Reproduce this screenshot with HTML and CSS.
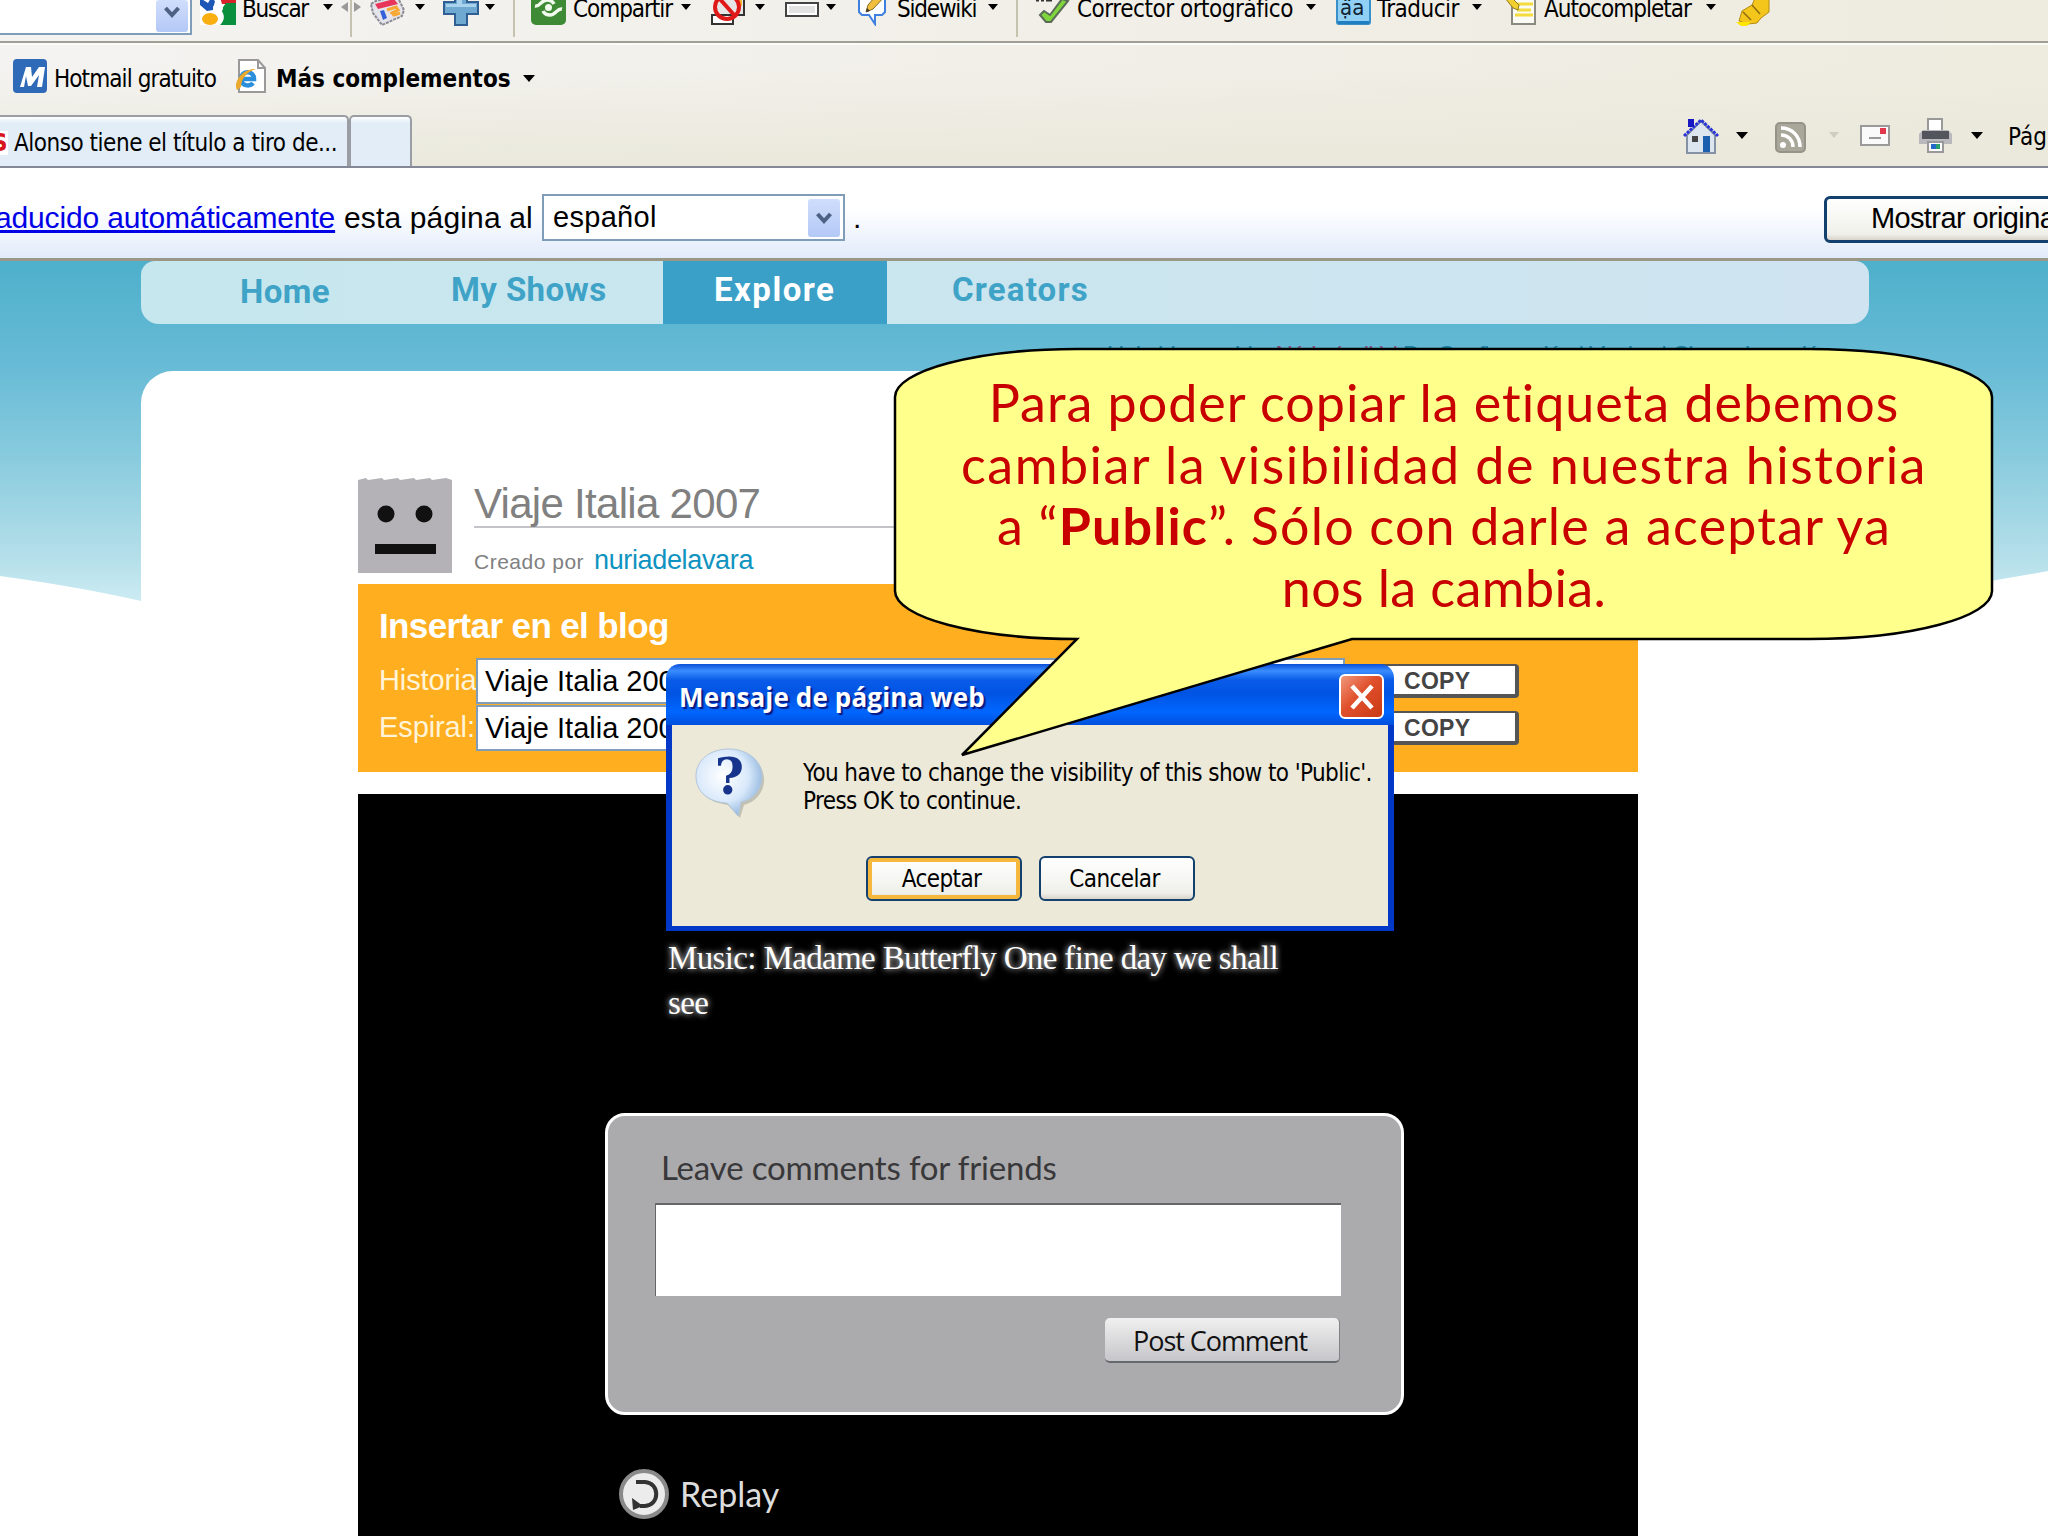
FILE: index.html
```html
<!DOCTYPE html>
<html lang="es">
<head>
  <meta charset="UTF-8" />
  <meta name="viewport" content="width=device-width, initial-scale=1.0"/>
  <title>Viaje Italia 2007</title>
  <link rel="stylesheet" href="styles.css">
</head>
<body>

  <div class="chrome">
    <div class="google-bar">
      <div class="search-box"><span class="drop"><svg width="16" height="12" viewBox="0 0 16 12"><path d="M1.500 2l6.500 7 6.500-7" /></svg></span></div>
      <svg class="tool-icon" width="36" height="36" viewBox="0 0 36 36">
        <path d="M0 0h36v35H0z" fill="#fff"/>
        <path d="M18 0h18v14H22z" fill="#d8232a"/>
        <path d="M36 13v22H20c5-5 5-10 1-15l5-7z" fill="#0a8f3c"/>
        <path d="M0 8l8 5 3-5 4 3-2 9-6 1-7-6z" fill="#1c57b8"/>
        <circle cx="18" cy="18" r="5" fill="#fff"/>
        <ellipse cx="10" cy="29" rx="8" ry="6" fill="#f9ae12"/>
      </svg>
      <span class="label buscar">Buscar</span>
      <i class="caret"></i>
      <div class="splitter"><i class="left"></i><i class="right"></i></div>
      <svg class="tool-icon" width="36" height="36" viewBox="0 0 36 36">
        <path d="M2 14l5-3L28 6l7 14-2 6-20 9-9-12z" fill="#e4e4ea" stroke="#8b8b95" stroke-width="2" stroke-dasharray="3 1"/>
        <path d="M6 14l19-5 4 5-20 5z" fill="#e8365a"/>
        <path d="M11 21l3 9 4-2-3-8z" fill="#3560d8"/>
        <path d="M18 20l9-3 2 3-6 3 2 2 6-2" fill="none" stroke="#f9a933" stroke-width="3"/>
      </svg>
      <i class="caret"></i>
      <svg class="tool-icon" width="36" height="36" viewBox="0 0 36 36">
        <path d="M12 1h12v11h11v12H24v11H12V24H1V12h11z" fill="#6fa9d2" stroke="#2f5f93" stroke-width="2"/>
        <path d="M14 3h5v11h-5zM3 14h30v3H3z" fill="#a9d2ec"/>
      </svg>
      <i class="caret"></i>
      <div class="separator"></div>
      <svg class="tool-icon" width="36" height="36" viewBox="0 0 36 36">
        <rect width="35" height="35" rx="5" fill="#3f8a35"/>
        <path d="M4 16c5 1 6-6 12-6 4 0 6 2 7 4M31 19c-5-1-6 6-12 6-4 0-6-2-7-4" fill="none" stroke="#f2faee" stroke-width="3.500"/>
        <circle cx="17.500" cy="17.500" r="3.500" fill="#f2faee"/>
      </svg>
      <span class="label compartir">Compartir</span>
      <i class="caret"></i>
      <svg class="tool-icon" width="36" height="36" viewBox="0 0 36 36">
        <rect x="6" y="8" width="28" height="17" fill="#e6e6e6" stroke="#333" stroke-width="2"/>
        <rect x="27" y="10" width="5" height="6" fill="#f2b632"/>
        <rect x="2" y="25" width="21" height="9" fill="#fff" stroke="#333" stroke-width="2"/>
        <circle cx="17" cy="17" r="12" fill="none" stroke="#e01818" stroke-width="4"/>
        <path d="M9 8l16 18" stroke="#e01818" stroke-width="4"/>
      </svg>
      <i class="caret"></i>
      <svg class="tool-icon" width="36" height="36" viewBox="0 0 36 36">
        <rect x="1" y="13" width="32" height="13" fill="#fff" stroke="#444" stroke-width="2"/>
        <rect x="4" y="16" width="26" height="7" fill="#e3e3e3"/>
      </svg>
      <i class="caret"></i>
      <svg class="tool-icon" width="36" height="36" viewBox="0 0 36 36">
        <path d="M2 4h26v18l-3 3h-7v9l-6-9H5l-3-3z" fill="#fdfeff" stroke="#3f7fe0" stroke-width="2"/>
        <path d="M9 22l2-7L24 0l6 4-14 15z" fill="#f2bf3c" stroke="#8a6a1c"/>
        <path d="M9 22l1-4 3 3z" fill="#333"/>
      </svg>
      <span class="label sidewiki">Sidewiki</span>
      <i class="caret"></i>
      <div class="separator"></div>
      <svg class="tool-icon" width="36" height="36" viewBox="0 0 36 36">
        <path d="M1 10h3M6 10h3M11 10h6" stroke="#333" stroke-width="3"/>
        <path d="M5 25l4-4 6 4L27 9l6 2-17 21h-5z" fill="#7fd63c" stroke="#5b6b58" stroke-width="2"/>
      </svg>
      <span class="label corrector">Corrector ortográfico</span>
      <i class="caret"></i>
      <svg class="tool-icon" width="36" height="36" viewBox="0 0 36 36">
        <rect x="1" y="1" width="33" height="33" rx="2" fill="#8fd0f4" stroke="#3a8fc8" stroke-width="2"/>
        <rect x="2" y="31" width="31" height="3" fill="#1f7fc0"/>
        <text x="4" y="25" class="glyph">ạ̈a</text>
      </svg>
      <span class="label traducir">Traducir</span>
      <i class="caret"></i>
      <svg class="tool-icon" width="36" height="36" viewBox="0 0 36 36">
        <rect x="7" y="4" width="23" height="30" fill="#fbfbf6" stroke="#8a8a80" stroke-width="2"/>
        <path d="M12 14h16M12 20h14M10 25h18" stroke="#f3dc3c" stroke-width="3"/>
        <path d="M0 8l4-3 10 10-1 5-5-2z" fill="#f1cf2e" stroke="#8f7a1e"/>
      </svg>
      <span class="label autocompletar">Autocompletar</span>
      <i class="caret"></i>
      <svg class="tool-icon" width="36" height="36" viewBox="0 0 36 36">
        <path d="M4 31l3-10 10-6 4-9 10-2 3 4v14l-8 6-4 5-9 1z" fill="#f4c61c" stroke="#b58a10"/>
        <path d="M17 15l8 9M8 22l8 8" stroke="#8f6c0c" stroke-width="1.500"/>
        <path d="M1 32h15l-4 4H6z" fill="#ffe600"/>
      </svg>
    </div>

    <div class="links-bar">
      <svg class="msn" width="34" height="34" viewBox="0 0 34 34">
        <rect width="34" height="34" rx="4" fill="#2f6ab8"/>
        <path d="M7 28L13 8h5l1 10 7-10h6l-3 20h-5l2-12-8 11h-3l-2-10-2 11z" fill="#fff"/>
      </svg>
      <span class="label hotmail">Hotmail gratuito</span>
      <svg class="ie" width="32" height="34" viewBox="0 0 32 34">
        <path d="M4 1h19l7 8v24H4z" fill="#fff" stroke="#999" stroke-width="2"/>
        <path d="M23 1v8h7" fill="none" stroke="#999" stroke-width="2"/>
        <path d="M18 24c-3 4-12 3-12-4 0-9 13-9 13 0H8" fill="none" stroke="#2c8fdc" stroke-width="4.500"/>
        <path d="M2 31C-2 25 6 9 21 10c-8 2-15 9-15 18z" fill="#eaa92c"/>
      </svg>
      <span class="label more">Más complementos</span>
      <i class="caret big"></i>
    </div>

    <div class="tabs-bar">
      <div class="tab"><b class="fav">S</b><span class="label tab-title">Alonso tiene el título a tiro de...</span></div>
      <div class="tab new-tab"></div>
      <div class="commands">
        <svg width="53" height="36" viewBox="0 0 53 36">
          <path d="M4 17L18 3l14 14v18H4z" fill="#dde6ee" stroke="#8492a4" stroke-width="2"/>
          <path d="M1 18L18 2l17 16" fill="none" stroke="#2a33d8" stroke-width="3" stroke-dasharray="3 1"/>
          <rect x="5" y="1" width="6" height="8" fill="#1717c4"/>
          <rect x="9" y="18" width="6" height="6" fill="#444"/>
          <rect x="20" y="18" width="7" height="16" fill="#1c5fae"/>
        </svg>
        <i class="caret big"></i>
        <svg width="54" height="36" viewBox="0 0 54 36">
          <rect x="1" y="5" width="29" height="29" rx="4" fill="#a9a69a" stroke="#96938a" stroke-width="2"/>
          <circle cx="8" cy="27" r="3" fill="#fff"/>
          <path d="M6 17c7 0 12 5 12 12M6 10c11 0 19 8 19 19" fill="none" stroke="#fff" stroke-width="3.500"/>
        </svg>
        <i class="caret off"></i>
        <svg width="58" height="36" viewBox="0 0 58 36">
          <rect x="1" y="8" width="28" height="19" fill="#fafafa" stroke="#9a9a9a" stroke-width="2"/>
          <rect x="20" y="10" width="6" height="6" fill="#e2384c"/>
          <path d="M9 20h12" stroke="#999" stroke-width="2"/>
        </svg>
        <svg width="53" height="36" viewBox="0 0 53 36">
          <rect x="10" y="1" width="14" height="14" fill="#fff" stroke="#999" stroke-width="2"/>
          <path d="M5 12h25l4 4v10H1V16z" fill="#b9b9bd"/>
          <rect x="4" y="13" width="27" height="8" fill="#54545c"/>
          <rect x="10" y="24" width="15" height="10" fill="#fff" stroke="#999" stroke-width="2"/>
          <path d="M13 26h5v5h-5z" fill="#2468c8"/><path d="M18 26h4v5h-4z" fill="#2aa06a"/>
        </svg>
        <i class="caret big"></i>
        <span class="label page-menu">Pág</span>
      </div>
    </div>
  </div>

  <div class="translate-bar">
    <a class="auto">aducido automáticamente</a>
    <span class="this-page">esta página al</span>
    <div class="language">español<span class="drop"><svg width="16" height="12" viewBox="0 0 16 12"><path d="M1.500 2l6.500 7 6.500-7" /></svg></span></div>
    <span class="dot">.</span>
    <div class="xp-button show-original">Mostrar original</div>
  </div>

  <div class="page">
    <svg class="hills" width="2048" height="60" viewBox="0 0 2048 60">
      <path d="M0 11Q80 22 141 36L600 60H0zM2048 6Q1960 22 1869 36L1400 60H2048z" fill="#fff"/>
    </svg>
    <div class="site-nav">
      <span class="home">Home</span>
      <span class="shows">My Shows</span>
      <span class="explore">Explore</span>
      <span class="creators">Creators</span>
    </div>
    <div class="user-links"><span>Hola bienvenida,</span> <em>Núria (salir) |</em> <span>De Configuración | Ver los | Cierre de sesión</span></div>

    <div class="panel">
      <div class="show-header">
        <svg class="avatar" width="94" height="96" viewBox="0 0 94 96">
          <path d="M0 3l8-2 2 2 14-2 2 2 14-2 2 2 14-2 2 2 14-2 2 2 14-2 6 2v93H0z" fill="#b4b2b6"/>
          <circle cx="28" cy="37" r="8.500" fill="#111"/>
          <circle cx="66" cy="37" r="8.500" fill="#111"/>
          <rect x="17" y="67" width="61" height="10" fill="#111"/>
        </svg>
        <div class="show-info">
          <h1>Viaje Italia 2007</h1>
          <p><small>Creado por</small><a>nuriadelavara</a></p>
        </div>
      </div>

      <div class="embed">
        <h2>Insertar en el blog</h2>
        <div class="embed-row">
          <label>Historia</label>
          <div class="field">Viaje Italia 2007</div>
          <div class="copy">COPY</div>
        </div>
        <div class="embed-row">
          <label>Espiral:</label>
          <div class="field">Viaje Italia 2007</div>
          <div class="copy">COPY</div>
        </div>
      </div>

      <div class="player">
        <div class="music">Music: Madame Butterfly One fine day we shall<br>see</div>
        <div class="comments">
          <h3>Leave comments for friends</h3>
          <div class="comment-text"></div>
          <div class="post">Post Comment</div>
        </div>
        <div class="replay">
          <svg width="52" height="52" viewBox="0 0 52 52">
            <circle cx="26" cy="26" r="23" fill="#ececec" stroke="#8a8a8a" stroke-width="4"/>
            <path d="M18 14h9c15 1 15 23 0 24h-5" fill="none" stroke="#333" stroke-width="4"/>
            <path d="M14 30l1 12 10-4z" fill="#333"/>
          </svg>
          <span>Replay</span>
        </div>
      </div>
    </div>
  </div>

  <div class="dialog" role="dialog">
    <div class="dialog-title">
      <span>Mensaje de página web</span>
      <div class="close"><svg width="30" height="30" viewBox="0 0 30 30"><path d="M5 4l20 22M25 4L5 26" stroke="#fff" stroke-width="4.500"/></svg></div>
    </div>
    <div class="dialog-body">
      <svg class="question" width="72" height="72" viewBox="0 0 72 72">
        <defs>
          <radialGradient id="bubble" cx=".4" cy=".4" r=".65">
            <stop offset="0" stop-color="#fff"/>
            <stop offset=".6" stop-color="#d9e9fb"/>
            <stop offset="1" stop-color="#8fb4dc"/>
          </radialGradient>
        </defs>
        <path d="M37 4c20 0 33 12 33 28 0 13-9 22-20 25l-4 13-12-13C14 54 4 45 4 31 4 15 17 4 37 4z" fill="#a5a79f" opacity=".6"/>
        <path d="M35 1c19 0 33 12 33 27S58 52 47 54l-3 14-11-13C14 54 2 44 2 28S16 1 35 1z" fill="url(#bubble)" stroke="#b4c6da"/>
        <text x="35" y="46" text-anchor="middle" class="mark">?</text>
      </svg>
      <div class="message">You have to change the visibility of this show to 'Public'.<br>Press OK to continue.</div>
      <div class="actions">
        <div class="xp-button default">Aceptar</div>
        <div class="xp-button">Cancelar</div>
      </div>
    </div>
  </div>

  <div class="callout">
    <svg class="callout-shape" width="1104" height="414" viewBox="0 0 1104 414">
      <path d="M185 3H917C1020 3 1100 25 1100 51V245C1100 271 1020 293 917 293H460L70 409 185 293C83 293 3 271 3 245V51C3 25 83 3 185 3z" fill="#ffff8c" stroke="#000" stroke-width="2.500"/>
    </svg>
    <div class="callout-text">
      <div class="line-1">Para poder copiar la etiqueta debemos</div>
      <div class="line-2">cambiar la visibilidad de nuestra historia</div>
      <div class="line-3">a “<b>Public</b>”. Sólo con darle a aceptar ya</div>
      <div class="line-4">nos la cambia.</div>
    </div>
  </div>

</body>
</html>
```
FILE: styles.css
```css
* {
  margin: 0;
  padding: 0;
  box-sizing: border-box;
}

body {
  width: 2048px;
  height: 1536px;
  overflow: hidden;
  position: relative;
  display: flex;
  flex-direction: column;
  background: #fff;
  font-family: Arial, 'Liberation Sans', sans-serif;
  white-space: nowrap;
}

svg {
  display: block;
  flex: none;
}

/* browser chrome */
.chrome {
  height: 168px;
  background: linear-gradient(to bottom, rgba(236, 233, 216, 0) 40%, rgba(233, 232, 218, 0.9)), linear-gradient(to right, #f4f3f1, #eeebdf);
  border-bottom: 2px solid #858896;
  font-family: Tahoma, 'DejaVu Sans Condensed', 'DejaVu Sans', sans-serif;
  font-size: 24px;
  line-height: 24px;
  color: #000;
}

.google-bar {
  height: 43px;
  overflow: hidden;
  display: grid;
  grid-template-columns: 200px 42px 81px 18px 28px 46px 28px 42px 28px 18px 42px 108px 29px 45px 30px 41px 31px 40px 91px 28px 19px 42px 229px 30px 41px 95px 33px 39px 162px 29px 1fr;
  grid-template-rows: 41px;
  border-bottom: 2px solid #a09f95;
}

.tool-icon {
  margin-top: -10px;
}

.google-bar .label {
  margin-top: -3px;
}

.buscar {
  letter-spacing: -1.3px;
}

.compartir {
  letter-spacing: -1.05px;
}

.sidewiki {
  letter-spacing: -1.2px;
}

.corrector {
  letter-spacing: -0.47px;
}

.traducir {
  letter-spacing: -0.5px;
}

.autocompletar {
  letter-spacing: -1px;
}

.caret {
  border: 5px solid transparent;
  border-top: 6px solid #000;
  border-bottom: 0;
  width: 10px;
  height: 6px;
  margin-top: 4px;
}

.caret.big {
  border-width: 7px 6px 0;
  width: 12px;
  height: 7px;
}

.caret.off {
  border-top-color: #cfccc0;
}

.search-box {
  width: 192px;
  height: 35px;
  background: #fff;
  border: solid #7f9db9;
  border-width: 0 2px 2px 0;
  display: flex;
  justify-content: flex-end;
}

.search-box .drop {
  height: 32px;
  margin-right: 2px;
  padding-bottom: 14px;
  align-items: flex-end;
}

.drop {
  width: 32px;
  background: linear-gradient(to bottom, #d0defc, #b4c8f6);
  border-radius: 3px;
  display: flex;
  align-items: center;
  justify-content: center;
}

.drop path {
  fill: none;
  stroke: #4d6185;
  stroke-width: 4;
}

.splitter {
  height: 37px;
  width: 20px;
  background: linear-gradient(#c5c2b0, #c5c2b0) 9px 0 / 2px 100% no-repeat;
  display: flex;
  justify-content: space-between;
}

.splitter i {
  height: 10px;
  margin-top: 2px;
  border: 5px solid transparent;
}

.splitter .left {
  border-left-width: 0;
  border-right: 7px solid #999;
}

.splitter .right {
  border-right-width: 0;
  border-left: 7px solid #999;
}

.separator {
  width: 2px;
  height: 37px;
  background: #c5c2b0;
}

.glyph {
  font-size: 22px;
  fill: #123;
}

.links-bar {
  height: 72px;
  border-top: 2px solid #fbfbf8;
  display: flex;
  align-items: center;
  padding: 0 0 5px 13px;
}

.links-bar svg {
  margin-bottom: 3px;
}

.links-bar .label {
  padding-top: 3px;
}

.links-bar .caret {
  margin-top: 2px;
}

.hotmail {
  width: 181px;
  margin-left: 7px;
  letter-spacing: -0.92px;
}

.more {
  width: 247px;
  margin-left: 9px;
  font-weight: bold;
}

.tabs-bar {
  height: 51px;
  display: flex;
  align-items: flex-end;
}

.tab {
  width: 349px;
  height: 51px;
  border: 2px solid #9a9da3;
  border-left: 0;
  border-bottom: 0;
  border-radius: 0 5px 0 0;
  background: linear-gradient(to bottom, #fff, #e2edf7 12%);
  display: flex;
  align-items: center;
  padding-top: 3px;
}

.fav {
  width: 14px;
  color: #d8141c;
  text-indent: -8px;
  background: linear-gradient(to right, #fff 8px, transparent 8px);
}

.tab-title {
  letter-spacing: -0.48px;
}

.new-tab {
  width: 63px;
  border-left: 2px solid #9a9da3;
  border-radius: 5px 5px 0 0;
}

.commands {
  margin-left: auto;
  width: 365px;
  height: 48px;
  display: flex;
}

.commands .caret {
  margin-top: 14px;
}

.commands .caret.off {
  margin-right: 21px;
}

.commands .caret + svg {
  margin-left: 27px;
}

.commands .caret.off + svg {
  margin-left: 0;
}

.page-menu {
  margin: 7px 0 0 25px;
}

/* translate bar */
.translate-bar {
  height: 93px;
  display: flex;
  align-items: center;
  background: linear-gradient(to bottom, #fff 45%, #e2ebfb);
  border-bottom: 3px solid #9b9787;
  font-size: 30px;
  padding-top: 9px;
  overflow: hidden;
}

.translate-bar > * {
  flex: none;
}

.auto {
  width: 349px;
  margin-left: -5px;
  letter-spacing: -0.15px;
  color: #0000e6;
  text-decoration: underline;
}

.this-page {
  width: 198px;
  letter-spacing: 0.15px;
}

.language {
  width: 303px;
  height: 47px;
  border: 2px solid #7f9db9;
  background: #fff;
  display: flex;
  justify-content: space-between;
  align-items: center;
  padding: 0 3px 0 9px;
  font-size: 29px;
  letter-spacing: 0.3px;
}

.language .drop {
  height: 38px;
}

.dot {
  width: 979px;
  padding-left: 8px;
}

.xp-button {
  border: 2px solid #14406e;
  border-radius: 6px;
  background: linear-gradient(to bottom, #fff, #f0f0ea 85%, #d8d4cb);
  display: flex;
  justify-content: center;
  align-items: center;
}

.show-original {
  width: 286px;
  height: 47px;
  border-width: 3px;
  margin-top: 3px;
  padding: 0 2px 1px 0;
  font-size: 29px;
  letter-spacing: -0.6px;
}

/* site */
.page {
  flex: 1;
  position: relative;
  background: linear-gradient(to bottom, #4eb0cb, #68bbd6 105px, #86cadd 190px, #b6e0ea 300px, #d2eef5 350px, #fff 350px);
}

.hills {
  position: absolute;
  left: 0;
  top: 304px;
}

.site-nav {
  width: 1728px;
  height: 63px;
  margin-left: 141px;
  border-radius: 14px 14px 18px 18px;
  background: linear-gradient(to right, #c6e7ee, #cfe4f0);
  display: flex;
  font: bold 33px/57px Roboto, sans-serif;
  color: #3ea3c6;
}

.home {
  width: 211px;
  margin-left: 99px;
  padding-top: 2px;
  letter-spacing: 0.4px;
}

.shows {
  width: 212px;
  letter-spacing: 0.4px;
}

.explore {
  width: 224px;
  margin-right: 65px;
  padding-left: 51px;
  background: #3ba0c8;
  color: #fff;
  letter-spacing: 1.5px;
}

.creators {
  letter-spacing: 1.2px;
}

.user-links {
  height: 47px;
  padding: 17px 0 0 1107px;
  font-size: 24px;
  letter-spacing: -1px;
  color: #16809f;
}

.user-links em {
  font-style: normal;
  color: #8a4a78;
}

.panel {
  position: relative;
  width: 1728px;
  height: 1165px;
  margin-left: 141px;
  padding: 106px 0 0 217px;
  background: #fff;
  border-radius: 32px 32px 0 0;
}

.show-header {
  display: flex;
  width: 1280px;
  height: 107px;
}

.show-info {
  flex: 1;
  margin-left: 22px;
}

.show-info h1 {
  height: 51px;
  border-bottom: 2px solid #c4c4c8;
  font-size: 42px;
  font-weight: normal;
  line-height: 54px;
  letter-spacing: -0.7px;
  color: #808080;
}

.show-info p {
  display: flex;
  align-items: baseline;
  line-height: 65px;
  font-size: 27px;
}

.show-info small {
  width: 120px;
  font-size: 21px;
  letter-spacing: 0.5px;
  color: #808080;
}

.show-info a {
  letter-spacing: -0.35px;
  color: #0f93c0;
}

.embed {
  width: 1280px;
  height: 188px;
  padding: 20px 21px 0;
  background: #ffae20;
  color: #fff;
}

.embed h2 {
  height: 53px;
  font-size: 35px;
  line-height: 44px;
  letter-spacing: -0.62px;
}

.embed-row {
  display: flex;
  align-items: center;
  height: 47px;
  font-size: 29px;
}

.embed-row label {
  width: 97px;
  letter-spacing: -0.1px;
  color: #fff4d8;
}

.field {
  width: 869px;
  height: 46px;
  border: 2px solid #7f9db9;
  background: #fff;
  color: #000;
  line-height: 43px;
  padding-left: 7px;
}

.copy {
  width: 156px;
  height: 34px;
  margin-left: 18px;
  padding-left: 39px;
  border: 2px solid #555;
  border-right-width: 4px;
  border-bottom-width: 4px;
  border-radius: 4px;
  background: #fff;
  font-size: 23px;
  font-weight: bold;
  line-height: 30px;
  letter-spacing: 0.3px;
  color: #444;
}

.player {
  width: 1280px;
  height: 742px;
  margin-top: 22px;
  padding: 142px 0 0 247px;
  background: #000;
  color: #fff;
}

.music {
  height: 177px;
  margin-left: 63px;
  font: 33px/45px 'Liberation Serif', serif;
  letter-spacing: -0.64px;
  text-shadow: 0 0 6px #fff;
}

.comments {
  width: 799px;
  height: 302px;
  border: 3px solid #fff;
  border-radius: 20px;
  background: #abaaac;
  padding: 29px 47px 0;
  font-family: Lato, sans-serif;
}

.comments h3 {
  height: 58px;
  padding-left: 6px;
  font-size: 33px;
  font-weight: normal;
  line-height: 44px;
  letter-spacing: -0.16px;
  color: #38383a;
}

.comment-text {
  width: 686px;
  height: 93px;
  background: #fff;
  border: solid #666;
  border-width: 2px 0 0 1px;
}

.post {
  width: 235px;
  height: 45px;
  margin: 22px 0 0 450px;
  padding-right: 4px;
  border-radius: 5px;
  border-bottom: 2px solid #66696c;
  border-right: 1px solid #808284;
  background: linear-gradient(to bottom, #f0f0f0, #c6c6ca);
  font: 27px/45px 'Open Sans', sans-serif;
  letter-spacing: -1.05px;
  color: #111;
  text-align: center;
}

.replay {
  display: flex;
  align-items: center;
  margin: 53px 0 0 13px;
  gap: 10px;
  font: 34px/48px Lato, sans-serif;
  color: #ddd;
}

/* message box */
.dialog {
  position: absolute;
  left: 666px;
  top: 664px;
  width: 728px;
  height: 267px;
  border-radius: 14px 14px 0 0;
  background: linear-gradient(to bottom, #0a4fd8, #3a8dff 7px, #0a5be8 16px, #0054e3 30px, #0066ff 48px, #0050dc 61px, #0138c8 61px);
  padding: 0 6px 5px;
}

.dialog-title {
  height: 61px;
  display: flex;
  justify-content: space-between;
  align-items: center;
  padding: 4px 4px 0 7px;
  font: bold 26px/40px 'Trebuchet MS', 'Open Sans', sans-serif;
  letter-spacing: 0.15px;
  color: #fff;
  text-shadow: 2px 2px 1px #0a1883;
}

.close {
  width: 45px;
  height: 45px;
  border: 2px solid #fff;
  border-radius: 6px;
  background: linear-gradient(135deg, #f0987c, #e0502c 45%, #c83a14);
  display: flex;
  align-items: center;
  justify-content: center;
}

.dialog-body {
  height: 201px;
  display: grid;
  grid-template-columns: 109px 1fr;
  grid-template-rows: 108px 1fr;
  padding: 23px 0 0 22px;
  background: #ece9d8;
  font: 24px/28px Tahoma, 'DejaVu Sans Condensed', 'DejaVu Sans', sans-serif;
  letter-spacing: -0.6px;
}

.message {
  padding-top: 11px;
}

.mark {
  font: bold 50px 'DejaVu Serif', serif;
  fill: #16348c;
}

.actions {
  grid-column: 1 / 3;
  display: flex;
  gap: 17px;
  margin-left: 172px;
}

.actions .xp-button {
  width: 156px;
  height: 45px;
  padding-right: 5px;
}

.actions .default {
  box-shadow: inset 0 0 0 4px #f6b83c;
}

/* speech balloon over the page */
.callout {
  position: absolute;
  left: 892px;
  top: 346px;
  width: 1104px;
  height: 414px;
}

.callout-shape {
  position: absolute;
}

.callout-text {
  position: relative;
  padding-top: 26px;
  font: 52px/61.500px 'Comic Sans MS', Lato, sans-serif;
  color: #c80000;
  text-align: center;
}

.line-1 {
  letter-spacing: 1px;
}

.line-2 {
  letter-spacing: 1.48px;
}

.line-3 {
  letter-spacing: 1.2px;
}

.line-4 {
  letter-spacing: 0.4px;
}
```
